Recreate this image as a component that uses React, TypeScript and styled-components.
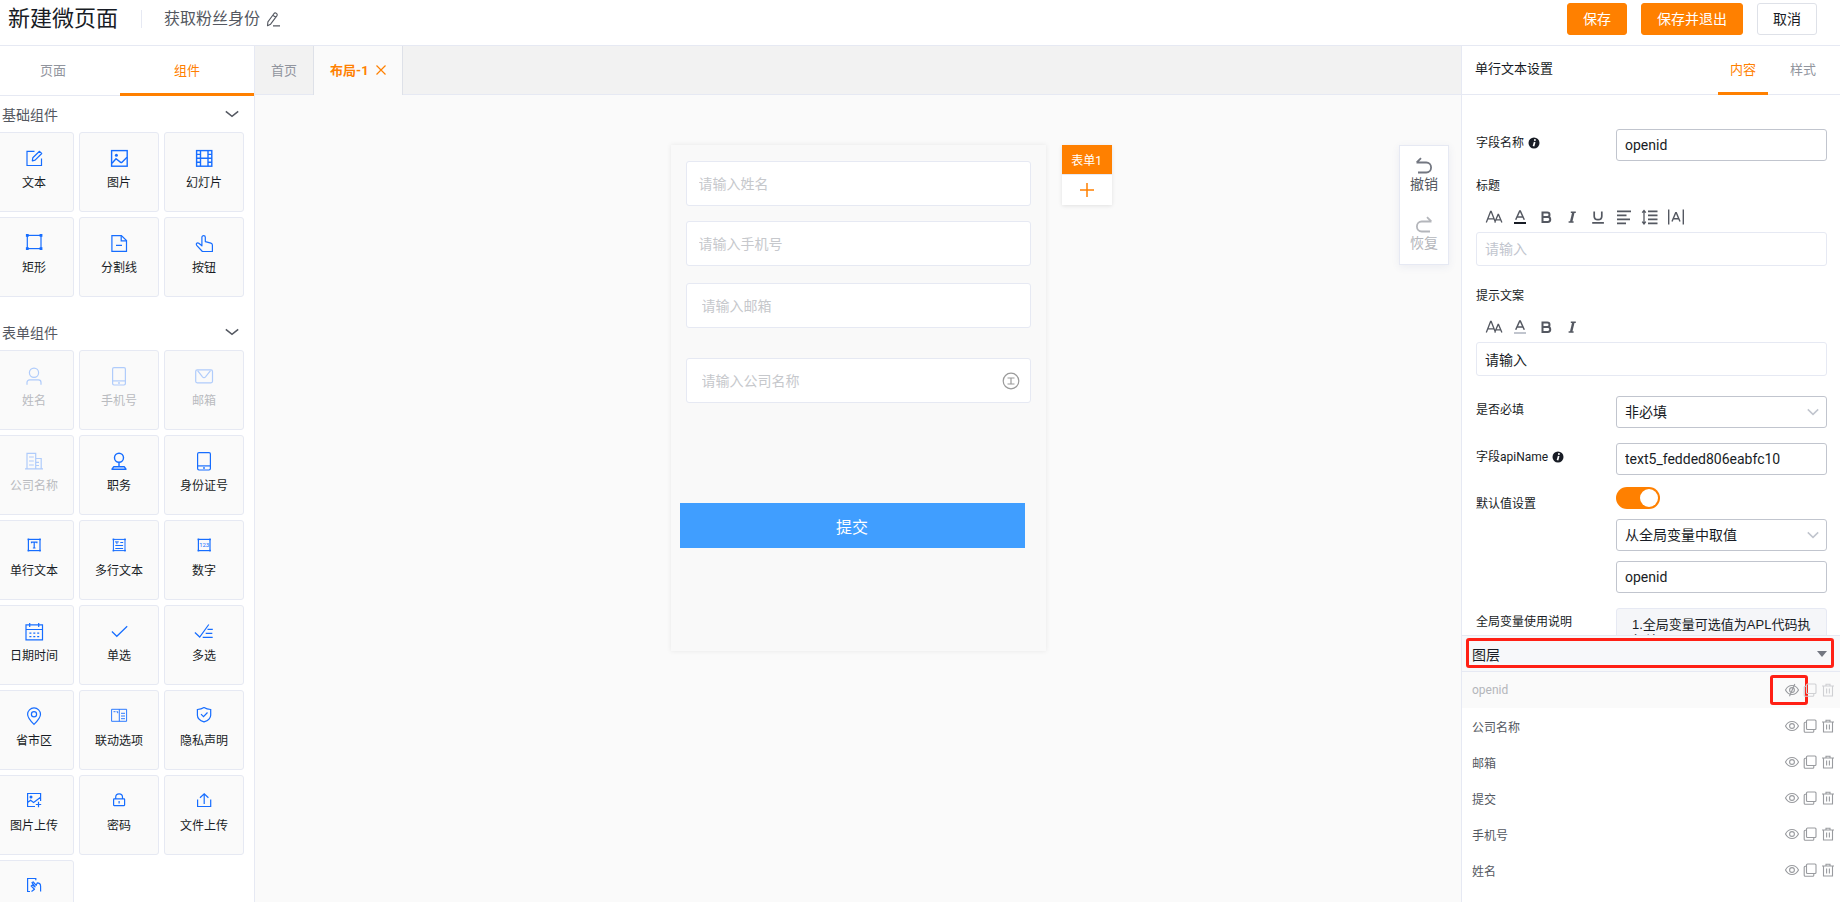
import React, { useState } from 'react';
import styled, { createGlobalStyle } from 'styled-components';

const color = {
  orange: '#ff8000',
  blue: '#166dff',
  text: '#181c25',
  sub: '#545861',
  mute: '#91959e',
  hint: '#c1c5ce',
  line: '#e6e9f3',
  canvas: '#fafafa',
  mark: '#ff2015',
};

const GlobalStyle = createGlobalStyle`
  *, *::before, *::after { box-sizing: border-box; }
  body {
    margin: 0;
    background: #fff;
    color: ${color.text};
    font-family: Roboto, "Noto Sans CJK SC", sans-serif;
    font-size: 14px;
  }
  button, input, select { font: inherit; color: inherit; }
  button { padding: 0; border: 0; background: none; cursor: pointer; }
  h1, h2, h3, p, ul { margin: 0; padding: 0; font-weight: 400; }
  svg { display: block; flex: none; }
`;

/* ---------- page frame ---------- */

const Page = styled.div`
  display: flex;
  flex-direction: column;
  height: 100vh;
  overflow: hidden;
`;

const Header = styled.header`
  display: flex;
  align-items: flex-start;
  flex: none;
  height: 46px;
  padding: 3px 23px 0 8px;
  border-bottom: 1px solid ${color.line};
`;

const PageTitle = styled.h1`
  font-size: 22px;
  line-height: 32px;
`;

const PageName = styled.div`
  display: flex;
  align-items: center;
  gap: 6px;
  margin: 7px 0 0 23px;
  padding-left: 22px;
  border-left: 1px solid ${color.line};
  color: ${color.sub};
  font-size: 16px;
  line-height: 18px;
`;

const Actions = styled.div`
  display: flex;
  gap: 14px;
  margin-left: auto;
`;

const ActionButton = styled.button<{ $primary?: boolean }>`
  height: 32px;
  padding: 0 15px;
  border: 1px solid ${(p) => (p.$primary ? color.orange : '#dee1e8')};
  border-radius: 3px;
  background: ${(p) => (p.$primary ? color.orange : '#fff')};
  color: ${(p) => (p.$primary ? '#fff' : color.text)};
  font-size: 14px;
  line-height: 30px;
`;

const Body = styled.div`
  display: grid;
  grid-template-columns: 255px minmax(0, 1fr) 379px;
  flex: 1;
  min-height: 0;
`;

/* ---------- component library ---------- */

const Library = styled.aside`
  display: flex;
  flex-direction: column;
  min-height: 0;
  overflow: hidden;
  border-right: 1px solid ${color.line};
`;

const LibraryTabs = styled.div`
  display: grid;
  grid-template-columns: 1fr 1fr;
  flex: none;
  height: 50px;
  margin-left: -14px;
  border-bottom: 1px solid ${color.line};
`;

const LibraryTab = styled.button<{ $active?: boolean }>`
  height: 50px;
  border-bottom: 3px solid ${(p) => (p.$active ? color.orange : 'transparent')};
  color: ${(p) => (p.$active ? color.orange : color.mute)};
  font-size: 13px;
`;

const Section = styled.section`
  flex: none;
  margin-bottom: 17px;
`;

const SectionTitle = styled.button`
  display: flex;
  align-items: center;
  justify-content: space-between;
  width: 100%;
  height: 36px;
  padding: 0 15px 0 2px;
  color: ${color.sub};
  font-size: 14px;
`;

const CardGrid = styled.div`
  display: grid;
  grid-template-columns: repeat(3, 80px);
  gap: 5px;
  margin-left: -6px;
`;

const Card = styled.button`
  display: flex;
  flex-direction: column;
  align-items: center;
  gap: 7px;
  height: 80px;
  padding-top: 15px;
  border: 1px solid ${color.line};
  border-radius: 3px;
  background: ${color.canvas};
  color: ${color.text};
  font-size: 12px;
  line-height: 16px;
  white-space: nowrap;
  svg { color: ${color.blue}; }
  &:disabled { color: #b9bbbf; cursor: default; }
  &:disabled svg { opacity: 0.32; }
`;

/* ---------- canvas ---------- */

const Stage = styled.main`
  display: flex;
  flex-direction: column;
  min-width: 0;
  background: ${color.canvas};
`;

const StageTabs = styled.div`
  display: flex;
  flex: none;
  height: 49px;
  background: #f2f2f2;
  box-shadow: inset 0 -1px ${color.line};
`;

const StageTab = styled.button<{ $active?: boolean }>`
  display: flex;
  align-items: center;
  gap: 7px;
  padding: 0 16px 2px;
  border-right: 1px solid #dee1e8;
  background: ${(p) => (p.$active ? color.canvas : 'transparent')};
  color: ${(p) => (p.$active ? color.orange : color.mute)};
  font-size: 13px;
  font-weight: ${(p) => (p.$active ? 700 : 400)};
`;

const Board = styled.div`
  display: grid;
  grid-template-columns: minmax(0, 1fr) 375px minmax(0, 1fr);
  align-items: start;
  padding-top: 50px;
`;

const Phone = styled.form`
  grid-column: 2;
  display: flex;
  flex-direction: column;
  min-height: 506px;
  padding: 16px 15px;
  background: #f9f9f9;
  box-shadow: 0 0 5px rgba(0, 0, 0, 0.08);
`;

const FieldBox = styled.label<{ $before?: number; $indent?: boolean }>`
  display: flex;
  align-items: center;
  height: 45px;
  margin-top: ${(p) => p.$before ?? 0}px;
  padding: 0 10px 0 ${(p) => (p.$indent ? 15 : 12)}px;
  border: 1px solid ${color.line};
  border-radius: 3px;
  background: #fff;
  color: #9a9a9a;
`;

const FieldInput = styled.input`
  flex: 1;
  min-width: 0;
  padding: 0;
  border: 0;
  outline: 0;
  background: none;
  color: ${color.text};
  font-size: 14px;
  &::placeholder { color: #c6c8cc; }
`;

const Submit = styled.button`
  height: 45px;
  margin: 100px 6px 0 -6px;
  background: #409eff;
  color: #fff;
  font-size: 16px;
`;

const SideTools = styled.div`
  display: flex;
  justify-content: space-between;
  align-items: flex-start;
  padding: 0 12px 0 16px;
`;

const FormTabs = styled.div`
  display: flex;
  flex-direction: column;
  gap: 1px;
  width: 50px;
  background: ${color.line};
  box-shadow: 0 1px 4px rgba(0, 0, 0, 0.1);
`;

const FormTab = styled.button<{ $active?: boolean }>`
  display: flex;
  align-items: center;
  justify-content: center;
  height: ${(p) => (p.$active ? 29 : 30)}px;
  background: ${(p) => (p.$active ? color.orange : '#fff')};
  color: ${(p) => (p.$active ? '#fff' : color.orange)};
  font-size: 12px;
`;

const History = styled.div`
  width: 50px;
  border: 1px solid ${color.line};
  background: #fff;
  box-shadow: 0 2px 8px rgba(60, 80, 140, 0.08);
`;

const HistoryButton = styled.button`
  display: flex;
  flex-direction: column;
  align-items: center;
  width: 100%;
  height: 59px;
  padding-top: 10px;
  color: ${color.sub};
  font-size: 14px;
  line-height: 16px;
  svg { color: #737781; }
  &:disabled, &:disabled svg { color: #b4b6bb; }
`;

/* ---------- settings ---------- */

const Settings = styled.aside`
  display: flex;
  flex-direction: column;
  min-height: 0;
  border-left: 1px solid ${color.line};
`;

const SettingsHead = styled.div`
  display: flex;
  align-items: stretch;
  gap: 10px;
  flex: none;
  height: 49px;
  padding: 0 12px 0 13px;
  border-bottom: 1px solid ${color.line};
`;

const SettingsTitle = styled.h2`
  margin-right: auto;
  font-size: 13px;
  line-height: 46px;
`;

const SettingsTab = styled.button<{ $active?: boolean }>`
  height: 49px;
  padding: 0 12px 2px;
  border-bottom: 3px solid ${(p) => (p.$active ? color.orange : 'transparent')};
  color: ${(p) => (p.$active ? color.orange : color.mute)};
  font-size: 13px;
`;

const Properties = styled.div`
  flex: 1;
  min-height: 0;
  overflow: hidden;
  padding: 34px 13px 0 14px;
`;

const Row = styled.div<{ $before?: number }>`
  display: grid;
  grid-template-columns: 140px minmax(0, 1fr);
  align-items: start;
  margin-top: ${(p) => p.$before ?? 0}px;
`;

const Label = styled.label<{ $tall?: boolean }>`
  display: flex;
  align-items: center;
  gap: 4px;
  font-size: 12px;
  line-height: ${(p) => (p.$tall ? 34 : 28)}px;
`;

const Stack = styled.div`
  display: flex;
  flex-direction: column;
  gap: 10px;
`;

const TextInput = styled.input<{ $soft?: boolean }>`
  display: block;
  width: 100%;
  height: ${(p) => (p.$soft ? 34 : 32)}px;
  padding: 0 8px;
  border: 1px solid ${(p) => (p.$soft ? color.line : color.hint)};
  border-radius: 3px;
  outline: 0;
  background: #fff;
  font-size: 14px;
  &::placeholder { color: ${color.hint}; }
`;

const SelectBox = styled.div`
  display: grid;
  align-items: center;
  > * { grid-area: 1 / 1; }
  > svg { justify-self: end; margin-right: 8px; color: ${color.hint}; pointer-events: none; }
`;

const Select = styled.select`
  width: 100%;
  height: 32px;
  padding: 0 8px;
  border: 1px solid ${color.hint};
  border-radius: 3px;
  outline: 0;
  appearance: none;
  background: #fff;
  font-size: 14px;
`;

const Switch = styled.input`
  width: 44px;
  height: 22px;
  margin: 0;
  padding: 2px;
  border-radius: 11px;
  appearance: none;
  background: ${color.hint};
  cursor: pointer;
  &::before {
    content: '';
    display: block;
    width: 18px;
    height: 18px;
    border-radius: 50%;
    background: #fff;
  }
  &:checked { background: ${color.orange}; }
  &:checked::before { margin-left: 22px; }
`;

const Editor = styled.div<{ $before: number }>`
  margin-top: ${(p) => p.$before}px;
`;

const EditorTools = styled.div`
  display: flex;
  height: 30px;
  margin-top: 2px;
  padding-left: 5px;
  color: ${color.sub};
`;

const EditorTool = styled.button`
  display: flex;
  align-items: center;
  justify-content: center;
  width: 26px;
`;

const Note = styled.div`
  min-height: 80px;
  padding: 8px 15px;
  border: 1px solid ${color.line};
  border-radius: 3px;
  background: #f5f6f9;
  font-family: "Liberation Sans", "Noto Sans CJK SC", sans-serif;
  font-size: 13px;
  line-height: 16px;
`;

/* ---------- layers ---------- */

const Layers = styled.section`
  flex: none;
  padding-bottom: 14px;
`;

const LayersHead = styled.button`
  position: relative;
  display: flex;
  align-items: center;
  justify-content: space-between;
  width: 100%;
  height: 37px;
  padding: 0 13px 0 10px;
  border: solid ${color.line};
  border-width: 1px 0;
  background: #f7f8fa;
  font-size: 14px;
`;

const Marker = styled.span<{ $inset: string }>`
  position: absolute;
  inset: ${(p) => p.$inset};
  border: 3px solid ${color.mark};
  border-radius: 3px;
  pointer-events: none;
`;

const LayerList = styled.ul`
  list-style: none;
`;

const LayerRow = styled.li<{ $hidden?: boolean }>`
  display: flex;
  align-items: center;
  height: 36px;
  padding: 0 3px 0 10px;
  background: ${(p) => (p.$hidden ? color.canvas : '#fff')};
  color: ${(p) => (p.$hidden ? '#b4b6ba' : color.sub)};
  font-size: 12px;
`;

const LayerName = styled.span`
  margin-right: auto;
`;

const LayerTool = styled.button<{ $faint?: boolean }>`
  position: relative;
  display: flex;
  align-items: center;
  justify-content: center;
  width: 18px;
  height: 36px;
  color: ${(p) => (p.$faint ? '#cfd0d3' : '#999b9f')};
`;

/* ---------- icons ---------- */

type IconProps = { w?: number; h?: number; sw?: number; children: React.ReactNode };

const Icon = ({ w = 20, h = 20, sw = 1.2, children }: IconProps) => (
  <svg width={w} height={h} viewBox={`0 0 ${w} ${h}`} fill="none" stroke="currentColor" strokeWidth={sw} aria-hidden="true">
    {children}
  </svg>
);

const Handles = ({ x1, y1, x2, y2, s }: { x1: number; y1: number; x2: number; y2: number; s: number }) => (
  <>
    <rect x={x1} y={y1} width={x2 - x1} height={y2 - y1} />
    {[[x1, y1], [x2, y1], [x1, y2], [x2, y2]].map(([x, y]) => (
      <rect key={`${x}-${y}`} x={x - s / 2} y={y - s / 2} width={s} height={s} fill="currentColor" stroke="none" />
    ))}
  </>
);

const icons: Record<string, React.ReactNode> = {
  text: (
    <Icon>
      <path d="M10.5 3.3H3v14.2h14.5V10.5" />
      <path d="M8.3 12.8l.5-3 6.7-6.5 2.2 2.2-6.6 6.6z" strokeLinejoin="round" />
    </Icon>
  ),
  image: (
    <Icon sw={1.4}>
      <rect x="2.6" y="2.6" width="15.6" height="15.6" />
      <circle cx="7.4" cy="7.3" r="1.5" fill="currentColor" stroke="none" />
      <path d="M3 15.2l4-4.4 4.6 3.6c.6.3 1 .2 1.4-.2l5-5" />
    </Icon>
  ),
  film: (
    <Icon sw={1.4}>
      <rect x="2.6" y="2.6" width="15.2" height="15.6" />
      <path d="M6.5 2.6v15.6M14 2.6v15.6M2.6 10.3h15.2M2.6 6.4h3.9M2.6 14.3h3.9M14 6.4h3.8M14 14.3h3.8" />
    </Icon>
  ),
  rect: (
    <Icon>
      <Handles x1={3.3} y1={2.4} x2={17} y2={15.6} s={2.8} />
    </Icon>
  ),
  divider: (
    <Icon>
      <path d="M12.4 2.6H2.9v15.8h14.6V7.6z" />
      <path d="M12.2 2.8v5h5M7 12.3h6" />
    </Icon>
  ),
  hand: (
    <Icon>
      <path
        d="M7.9 12.8V4.3a1.7 1.7 0 0 1 3.4 0v4.3l5.6 1.5c1 .3 1.5.9 1.5 1.8v6.6H8.4l-5.7-6.2c-1.2-1.6.6-3.2 2.1-2z"
        strokeLinejoin="round"
      />
    </Icon>
  ),
  user: (
    <Icon>
      <circle cx="10" cy="6.7" r="4.6" />
      <path d="M3 18.8v-2.3a2.6 2.6 0 0 1 2.6-2.6h8.8a2.6 2.6 0 0 1 2.6 2.6v2.3" />
    </Icon>
  ),
  phone: (
    <Icon>
      <rect x="3.6" y="1.6" width="12.8" height="17.4" rx="1.4" />
      <path d="M3.6 14.9h12.8" />
      <circle cx="10" cy="17" r=".9" fill="currentColor" stroke="none" />
    </Icon>
  ),
  mail: (
    <Icon>
      <rect x="1.7" y="3.9" width="16.8" height="12.9" rx="1.5" />
      <path d="M3.6 4.6l4.9 6.2c.9 1 2.1 1 3 0l5-6.2" />
    </Icon>
  ),
  company: (
    <Icon>
      <path d="M1 17.8h18M3 17.8V2.4h8.7v15.4M11.7 7.5h5.5v10.3M5 6h4.8M5 10h4.8M5 14h4.8M12 11.3h3M12 14.5h3" />
    </Icon>
  ),
  stamp: (
    <Icon sw={1.4}>
      <circle cx="10" cy="6.7" r="4.5" />
      <path d="M10 11.2v4.3M4.8 15.7h10.4l1.8 2.5H3z" strokeLinejoin="round" />
    </Icon>
  ),
  line: (
    <Icon>
      <Handles x1={4.4} y1={3.4} x2={16} y2={14.6} s={1.6} />
      <path d="M7.5 7.2V6.2h5.4v1M10.2 6.2v5.8M8.9 12h2.6" />
    </Icon>
  ),
  lines: (
    <Icon sw={1}>
      <Handles x1={4.4} y1={3.4} x2={16} y2={14.6} s={1.6} />
      <path d="M6 5.9h3.8M7.9 5.9v2.300M11.300 6.500h2.900M6.300 9.500h7.800M6.300 12.500h7.800" />
    </Icon>
  ),
  number: (
    <Icon>
      <Handles x1={4.4} y1={3.4} x2={16} y2={14.6} s={1.6} />
      <text x="10.2" y="11.4" fontSize="6" textAnchor="middle" fill="currentColor" stroke="none">123</text>
    </Icon>
  ),
  date: (
    <Icon>
      <path d="M2 3.8h16.5v15H2zM2 8.5h16.5M5.7 2v4M14.7 2v4" />
      <path d="M5.4 12.2h9.8M5.4 15.700h9.8" strokeDasharray="2 1.9" />
    </Icon>
  ),
  check: (
    <Icon>
      <path d="M2.9 10.5l4.9 4.8L18.2 5.2" />
    </Icon>
  ),
  checks: (
    <Icon>
      <path d="M.9 11.5l4.8 4.5L14.8 3.5M13.5 8.4h5.3M11.7 12.4h6.6M8.7 16.3h10" />
    </Icon>
  ),
  pin: (
    <Icon>
      <path d="M10 18.4C6.5 15 3.6 11.6 3.6 8.3a6.4 6.3 0 0 1 12.9 0c0 3.3-3 6.7-6.5 10.1z" />
      <circle cx="10" cy="8.3" r="2.6" />
    </Icon>
  ),
  linkage: (
    <Icon sw={0.9}>
      <path d="M2.6 3.3h15v12h-15zM10.3 3.3v12M4.5 5.7h2M7.5 5.7h1.2v1.5M12 7.3h4M12 10h4M12 12.7h4" />
    </Icon>
  ),
  shield: (
    <Icon>
      <path d="M10 1.6c2.2 1.3 4.4 1.8 6.7 1.9v5.7c0 3.3-2.7 5.3-6.7 6.7-4-1.4-6.6-3.4-6.6-6.7V3.5C5.7 3.4 7.9 2.9 10 1.6z" />
      <path d="M7 8.2l2.5 2.5 4-4.2" />
    </Icon>
  ),
  imageUp: (
    <Icon>
      <path d="M11 15.5H3.6v-13h13v7.5M3.6 11.5l3-2.3 3 2.3 7-5.2M14.5 10.8v5.4M11.8 13.5h5.4" />
      <circle cx="7" cy="6" r="1.5" fill="currentColor" stroke="none" />
    </Icon>
  ),
  lock: (
    <Icon>
      <rect x="4.6" y="7.9" width="11" height="6.7" rx=".5" />
      <path d="M6.7 7.9V6.2a3.4 3.4 0 0 1 6.8 0v1.7M10.1 10v2.6" />
    </Icon>
  ),
  upload: (
    <Icon>
      <path d="M3.6 8.5v7h13.1v-7M10.2 13V2.9M6 6.8l4.2-4 4.2 4" />
    </Icon>
  ),
  sign: (
    <Icon>
      <path d="M6 15.5H3.6v-13h8.2v1.800" />
      <path d="M7.500 15.500l3-2.300-3.300-3.200 1.300-.9 2.600 1.800-3.100-4.300 1.200-.7 3 3.500 1-2.500c2.300 0 3.400 1.300 3.400 3.500v5.100" strokeLinejoin="round" />
    </Icon>
  ),
};

const Chevron = ({ w }: { w: number }) => (
  <Icon w={w} h={8} sw={1.5}>
    <path d={`M.8 1.4l${w / 2 - 0.8} 5 ${w / 2 - 0.8} -5`} />
  </Icon>
);

const Pencil = () => (
  <Icon w={14} h={15} sw={1.1}>
    <path d="M1.5 13.8l.4-3.9 6-8.2c.7-.9 1.7-.9 2.5-.3.9.7 1 1.6.4 2.5l-6.2 8.3zM6.9 3.2l2.9 2.2M7 13.9h7" strokeLinejoin="round" />
  </Icon>
);

const Info = () => (
  <Icon w={12} h={12}>
    <circle cx="6" cy="6" r="5.5" fill={color.text} stroke="none" />
    <path d="M6.7 5L5.5 9.2" stroke="#fff" strokeWidth="1.7" />
    <circle cx="6.9" cy="3" r=".95" fill="#fff" stroke="none" />
  </Icon>
);

const tools: Record<string, React.ReactNode> = {
  size: (
    <Icon w={18} h={16} sw={1.3}>
      <path d="M1.3 13.5L5.6 2.5h.6l4.3 11M2.7 9.8h6.4M9.7 13.5l3.4-8h.4l3.4 8M10.9 10.9h4.8" />
    </Icon>
  ),
  bold: (
    <Icon w={16} h={16} sw={2}>
      <path d="M4.5 3.5h4.7a2.2 2.2 0 0 1 0 4.6H4.5zM4.5 8.1h5.3a2.4 2.4 0 0 1 0 4.9H4.5z" />
    </Icon>
  ),
  italic: (
    <Icon w={16} h={16} sw={1.5}>
      <path d="M6.8 3.2h5M4.6 13h5" />
      <path d="M9.4 3.2L7.1 13" strokeWidth="2.4" />
    </Icon>
  ),
  underline: (
    <Icon w={16} h={16} sw={1.7}>
      <path d="M4.2 2.5v4.8c0 2.2 1.5 3.4 3.8 3.4s3.8-1.2 3.8-3.4V2.500M2.200 13.800h11.700" />
    </Icon>
  ),
  align: (
    <Icon w={16} h={16} sw={1.8}>
      <path d="M1 2.300h14M1 6.300h9.500M1 10.300h13M1 14.300h9" />
    </Icon>
  ),
  leading: (
    <Icon w={18} h={16} sw={1.8}>
      <path d="M7 2.300h9.500M7 6.300h9.500M7 10.300h9.500M7 14.300h9.500" />
      <path d="M3 1.500v13.500M1.200 3.700L3 1.500l1.800 2.200M1.200 12.700L3 15l1.800-2.300" strokeWidth="1.3" />
    </Icon>
  ),
  spacing: (
    <Icon w={18} h={16} sw={1.4}>
      <path d="M1.700.5v15M16.300.5v15M5 12.500L8.700 3.700h.6l3.700 8.800M6.300 9.700h5.400" />
    </Icon>
  ),
};

const ColorTool = ({ bar }: { bar: string }) => (
  <Icon w={16} h={16} sw={1.5}>
    <path d="M3.7 10.8L7.700 2h.6l4 8.800M5 8h6" />
    <path d="M2 14h12" stroke={bar} strokeWidth="2" />
  </Icon>
);

const Eye = ({ off }: { off?: boolean }) => (
  <Icon w={16} h={14} sw={1.1}>
    <path d="M1.500 7C3 4 5.300 2.500 8 2.500S13 4 14.500 7C13 10 10.700 11.500 8 11.500S3 10 1.500 7z" />
    <circle cx="8" cy="7" r="2.400" />
    {off && <path d="M10.800 1L5.500 13.200" />}
  </Icon>
);

const Copy = () => (
  <Icon w={14} h={14} sw={1.1}>
    <rect x="3.500" y="1" width="9.500" height="9.500" rx="1" />
    <path d="M3.500 3.300H2.200a1 1 0 0 0-1 1v7.900a1 1 0 0 0 1 1h7.600a1 1 0 0 0 1-1v-1.700" />
  </Icon>
);

const Trash = () => (
  <Icon w={12} h={14} sw={1.1}>
    <path d="M0 3h12M4 3V1.200h4V3M1.500 3v10h9V3M4.600 5.500v5M7.400 5.500v5" />
  </Icon>
);

const Turn = ({ redo }: { redo?: boolean }) => (
  <Icon w={18} h={20} sw={1.8}>
    <path d={redo ? 'M16.500 6.500H6.700a4.800 5 0 0 0 0 10H15M12 2.200l4.300 4.300' : 'M1.500 6.500h9.800a4.800 5 0 0 1 0 10H3M6 2.200L1.700 6.500'} />
  </Icon>
);

/* ---------- data ---------- */

type Item = { icon: string; label?: string; name?: string; disabled?: boolean };

const basic: Item[] = [
  { icon: 'text', label: '文本' },
  { icon: 'image', label: '图片' },
  { icon: 'film', label: '幻灯片' },
  { icon: 'rect', label: '矩形' },
  { icon: 'divider', label: '分割线' },
  { icon: 'hand', label: '按钮' },
];

const formItems: Item[] = [
  { icon: 'user', label: '姓名', disabled: true },
  { icon: 'phone', label: '手机号', disabled: true },
  { icon: 'mail', label: '邮箱', disabled: true },
  { icon: 'company', label: '公司名称', disabled: true },
  { icon: 'stamp', label: '职务' },
  { icon: 'phone', label: '身份证号' },
  { icon: 'line', label: '单行文本' },
  { icon: 'lines', label: '多行文本' },
  { icon: 'number', label: '数字' },
  { icon: 'date', label: '日期时间' },
  { icon: 'check', label: '单选' },
  { icon: 'checks', label: '多选' },
  { icon: 'pin', label: '省市区' },
  { icon: 'linkage', label: '联动选项' },
  { icon: 'shield', label: '隐私声明' },
  { icon: 'imageUp', label: '图片上传' },
  { icon: 'lock', label: '密码' },
  { icon: 'upload', label: '文件上传' },
  { icon: 'sign', name: '签名' },
];

const layers = ['openid', '公司名称', '邮箱', '提交', '手机号', '姓名'];

const Group = ({ title, items }: { title: string; items: Item[] }) => (
  <Section>
    <SectionTitle type="button">
      {title}
      <Chevron w={14} />
    </SectionTitle>
    <CardGrid>
      {items.map((item, i) => (
        <Card key={i} type="button" disabled={item.disabled} aria-label={item.name}>
          {icons[item.icon]}
          {item.label}
        </Card>
      ))}
    </CardGrid>
  </Section>
);

const ToolRow = ({ names, bar }: { names: string[]; bar: string }) => (
  <EditorTools>
    {names.map((n) => (
      <EditorTool key={n} type="button" aria-label={n}>
        {n === 'color' ? <ColorTool bar={bar} /> : tools[n]}
      </EditorTool>
    ))}
  </EditorTools>
);

export default function App() {
  const [useDefault, setUseDefault] = useState(true);
  return (
    <Page>
      <GlobalStyle />
      <Header>
        <PageTitle>新建微页面</PageTitle>
        <PageName>
          获取粉丝身份
          <Pencil />
        </PageName>
        <Actions>
          <ActionButton type="button" $primary>保存</ActionButton>
          <ActionButton type="button" $primary>保存并退出</ActionButton>
          <ActionButton type="button">取消</ActionButton>
        </Actions>
      </Header>

      <Body>
        <Library>
          <LibraryTabs>
            <LibraryTab type="button">页面</LibraryTab>
            <LibraryTab type="button" $active>组件</LibraryTab>
          </LibraryTabs>
          <Group title="基础组件" items={basic} />
          <Group title="表单组件" items={formItems} />
        </Library>

        <Stage>
          <StageTabs>
            <StageTab type="button">首页</StageTab>
            <StageTab type="button" $active>
              布局-1
              <Icon w={10} h={10}>
                <path d="M.5.5l9 9M9.500.5l-9 9" />
              </Icon>
            </StageTab>
          </StageTabs>
          <Board>
            <Phone onSubmit={(e) => e.preventDefault()}>
              <FieldBox>
                <FieldInput placeholder="请输入姓名" aria-label="姓名" />
              </FieldBox>
              <FieldBox $before={15}>
                <FieldInput placeholder="请输入手机号" aria-label="手机号" />
              </FieldBox>
              <FieldBox $before={17} $indent>
                <FieldInput placeholder="请输入邮箱" aria-label="邮箱" />
              </FieldBox>
              <FieldBox $before={30} $indent>
                <FieldInput placeholder="请输入公司名称" aria-label="公司名称" />
                <Icon w={18} h={18}>
                  <circle cx="9" cy="9" r="7.8" />
                  <path d="M5.500 6h7M5.500 12h7M9 6v6" />
                </Icon>
              </FieldBox>
              <Submit type="submit">提交</Submit>
            </Phone>
            <SideTools>
              <FormTabs>
                <FormTab type="button" $active>表单1</FormTab>
                <FormTab type="button" aria-label="添加表单">
                  <Icon w={14} h={14} sw={1.5}>
                    <path d="M7 0v14M0 7h14" />
                  </Icon>
                </FormTab>
              </FormTabs>
              <History>
                <HistoryButton type="button">
                  <Turn />
                  撤销
                </HistoryButton>
                <HistoryButton type="button" disabled>
                  <Turn redo />
                  恢复
                </HistoryButton>
              </History>
            </SideTools>
          </Board>
        </Stage>

        <Settings>
          <SettingsHead>
            <SettingsTitle>单行文本设置</SettingsTitle>
            <SettingsTab type="button" $active>内容</SettingsTab>
            <SettingsTab type="button">样式</SettingsTab>
          </SettingsHead>
          <Properties>
            <Row>
              <Label htmlFor="field-name">字段名称<Info /></Label>
              <TextInput id="field-name" defaultValue="openid" />
            </Row>
            <Editor $before={11}>
              <Label htmlFor="field-title">标题</Label>
              <ToolRow names={['size', 'color', 'bold', 'italic', 'underline', 'align', 'leading', 'spacing']} bar={color.text} />
              <TextInput id="field-title" $soft placeholder="请输入" />
            </Editor>
            <Editor $before={16}>
              <Label htmlFor="field-hint">提示文案</Label>
              <ToolRow names={['size', 'color', 'bold', 'italic']} bar={color.hint} />
              <TextInput id="field-hint" $soft defaultValue="请输入" />
            </Editor>
            <Row $before={20}>
              <Label htmlFor="required">是否必填</Label>
              <SelectBox>
                <Select id="required">
                  <option>非必填</option>
                </Select>
                <Chevron w={12} />
              </SelectBox>
            </Row>
            <Row $before={15}>
              <Label htmlFor="api-name">字段apiName<Info /></Label>
              <TextInput id="api-name" defaultValue="text5_fedded806eabfc10" />
            </Row>
            <Row $before={12}>
              <Label htmlFor="use-default" $tall>默认值设置</Label>
              <Stack>
                <Switch
                  id="use-default"
                  type="checkbox"
                  role="switch"
                  checked={useDefault}
                  onChange={(e) => setUseDefault(e.target.checked)}
                />
                <SelectBox>
                  <Select aria-label="默认值来源">
                    <option>从全局变量中取值</option>
                  </Select>
                  <Chevron w={12} />
                </SelectBox>
                <TextInput aria-label="全局变量名" defaultValue="openid" />
              </Stack>
            </Row>
            <Row $before={15}>
              <Label as="span">全局变量使用说明</Label>
              <Note>1.全局变量可选值为APL代码执行结果</Note>
            </Row>
          </Properties>
          <Layers>
            <LayersHead type="button">
              图层
              <svg width="10" height="6" viewBox="0 0 10 6" fill="#737781" aria-hidden="true">
                <path d="M0 0h10L5 6z" />
              </svg>
              <Marker $inset="2px 6px 3px 4px" />
            </LayersHead>
            <LayerList>
              {layers.map((name, i) => (
                <LayerRow key={name} $hidden={i === 0}>
                  <LayerName>{name}</LayerName>
                  <LayerTool type="button" aria-label={i === 0 ? '显示' : '隐藏'}>
                    <Eye off={i === 0} />
                    {i === 0 && <Marker $inset="3px -7px 3px -13px" />}
                  </LayerTool>
                  <LayerTool type="button" aria-label="复制" $faint={i === 0}>
                    <Copy />
                  </LayerTool>
                  <LayerTool type="button" aria-label="删除" $faint={i === 0}>
                    <Trash />
                  </LayerTool>
                </LayerRow>
              ))}
            </LayerList>
          </Layers>
        </Settings>
      </Body>
    </Page>
  );
}
